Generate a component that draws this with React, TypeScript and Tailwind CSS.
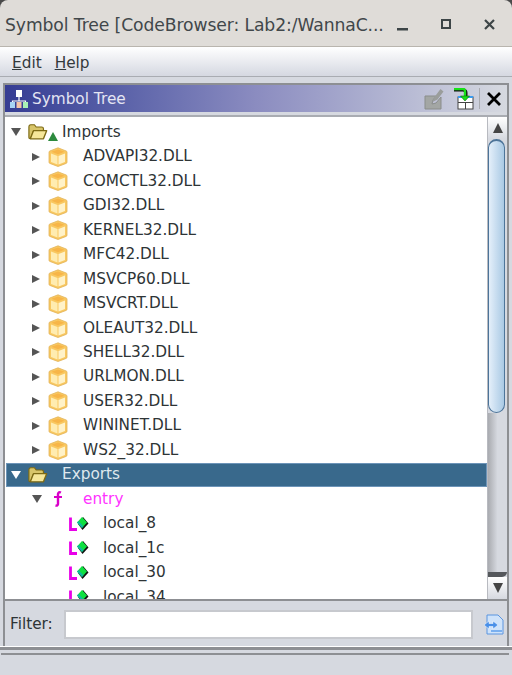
const dlls = [
  'ADVAPI32.DLL',
  'COMCTL32.DLL',
  'GDI32.DLL',
  'KERNEL32.DLL',
  'MFC42.DLL',
  'MSVCP60.DLL',
  'MSVCRT.DLL',
  'OLEAUT32.DLL',
  'SHELL32.DLL',
  'URLMON.DLL',
  'USER32.DLL',
  'WININET.DLL',
  'WS2_32.DLL',
]

const locals = ['local_8', 'local_1c', 'local_30', 'local_34']

function Arrow({ open, color = '#555' }: { open?: boolean; color?: string }) {
  return (
    <svg width="10" height="10" viewBox="0 0 10 10" className="shrink-0">
      {open ? <path d="M0 1h10L5 9z" fill={color} /> : <path d="M1 1l8 4-8 4z" fill={color} />}
    </svg>
  )
}

function Folder() {
  return (
    <svg width="20" height="18" viewBox="0 0 22 18" className="shrink-0">
      <path d="M1 3.500Q1 1 3 1h4l2 2.500h6q2 0 2 2V8H6L3 16H2q-1 0-1-1z" fill="#d8c56a" stroke="#7d6a14" strokeWidth="1.300" />
      <path d="M6 7.500h14.500L17 16.500H2.500z" fill="#f6e79a" stroke="#7d6a14" strokeWidth="1.500" strokeLinejoin="round" />
    </svg>
  )
}

function Cube() {
  return (
    <svg width="20" height="20" viewBox="0 0 20 20" className="shrink-0">
      <path d="M10 .8l8.200 3.200q.8.300.8 1.200v10q0 .9-.8 1.200L10 19.500 1.800 16.400Q1 16.100 1 15.200v-10q0-.9.800-1.200z" fill="#f9c860" stroke="#e2b45a" strokeWidth=".8" />
      <path d="M3 6.500l6.500 2.500v8.500L3 15z" fill="#ffecb0" />
      <path d="M17 6.500L10.500 9v8.500L17 15z" fill="#fff2c8" />
      <path d="M3.500 4.800L10 2.500l6.500 2.300L10 7.300z" fill="#f7b548" />
    </svg>
  )
}

function LocalIcon() {
  return (
    <svg width="20" height="16" viewBox="0 0 20 16" className="shrink-0">
      <path d="M1.500 1.500v12H8" fill="none" stroke="#e800e8" strokeWidth="2.800" />
      <path d="M9 8l5-7 5.500 6.500-6 6.500z" fill="#101010" />
      <path d="M8 6.500L13 1l5 5.500-5 5.500z" fill="#0fe040" />
      <path d="M8 6.500l5 5.500 1.500-1.800L9.500 5z" fill="#10b8a0" />
    </svg>
  )
}

function Row({ indent, children }: { indent: string; children: React.ReactNode }) {
  return <div className={`flex h-[24.47px] shrink-0 items-center ${indent}`}>{children}</div>
}

export default function App() {
  return (
    <div
      className="flex h-[675px] w-[512px] flex-col overflow-hidden bg-[#4a4a4a] text-[15.3px] text-[#2e3436]"
      style={{ fontFamily: '"DejaVu Sans", sans-serif' }}
    >
      <div className="flex h-[47px] shrink-0 items-center rounded-t-[8px] border-b border-[#b9b5ae] bg-[#dfdcd8] pl-[5px] pt-[6px]">
        <span className="whitespace-nowrap text-[17.2px] font-medium tracking-[-0.1px] text-[#41474a]">
          Symbol Tree [CodeBrowser: Lab2:/WannaC...
        </span>
        <svg width="11" height="4" viewBox="0 0 11 4" className="ml-[13px] mt-[7px] shrink-0">
          <rect width="11" height="2.500" fill="#3d4547" />
        </svg>
        <div className="ml-[33px] mb-[4px] h-[10px] w-[10px] shrink-0 border-[2.500px] border-[#3d4547]" />
        <svg width="11" height="11" viewBox="0 0 11 11" className="ml-[33px] mb-[3px] shrink-0">
          <path d="M1 1l9 9M10 1l-9 9" stroke="#3d4547" strokeWidth="2.200" />
        </svg>
      </div>

      <div className="flex h-[30px] shrink-0 items-center gap-[13px] border-b border-[#a9acb2] bg-gradient-to-b from-white to-[#d5d8e1] pl-[12px] pt-[3px] text-[#33393b]">
        <span>
          <span className="underline">E</span>dit
        </span>
        <span>
          <span className="underline">H</span>elp
        </span>
      </div>

      <div className="flex min-h-0 flex-1 flex-col bg-[#d6d9e0]">
        <div className="ml-[3px] mr-[3px] mt-[6px] flex h-[518px] shrink-0 flex-col border-2 border-[#8d8f93] bg-[#d6d9e0]">
          <div className="flex h-[27px] shrink-0 items-center bg-gradient-to-r from-[#353c93] via-[#8b8cc0] to-[#d6d9e0] pl-[4px] pr-[6px]">
            <svg width="20" height="20" viewBox="0 0 20 20" className="shrink-0">
              <rect x="7" y="1" width="6" height="7" fill="#fff" />
              <path d="M10 8v4M3.500 14v-2h13v2" fill="none" stroke="#fff" strokeWidth="1.200" />
              <rect x="1" y="13" width="5" height="6" fill="#a9d4f5" />
              <rect x="7.500" y="13" width="5" height="6" fill="#f5c4a9" />
              <rect x="14" y="13" width="5" height="6" fill="#a9f0b5" />
            </svg>
            <span className="ml-[3px] pt-[1px] text-[#e4e5f3]">Symbol Tree</span>
            <svg width="20" height="22" viewBox="0 0 20 22" className="ml-auto shrink-0">
              <path d="M1 8h11l-3 4-1 4 4-1 5-6v12H1z" fill="#a3a6a4" stroke="#8a8d8b" />
              <path d="M8.500 14l2-5 6-8 3 2.500-6 8z" fill="#9a9d9b" />
            </svg>
            <svg width="20" height="22" viewBox="0 0 20 22" className="ml-[10px] shrink-0">
              <rect x="4" y="9" width="15" height="12" fill="#fff" stroke="#444" />
              <rect x="4" y="8" width="15" height="2" fill="#3a9bf0" />
              <path d="M4 14.500h15M11.500 14.500V21" stroke="#444" />
              <path d="M0 2h9q3 0 3 3v5" fill="none" stroke="#111" strokeWidth="3" />
              <path d="M0 1h9q2 0 2 2v6" fill="none" stroke="#18e018" strokeWidth="2.400" />
              <path d="M6.500 8h9L11 13z" fill="#18e018" stroke="#0a6a0a" strokeWidth=".6" />
            </svg>
            <div className="ml-[5px] h-[21px] w-[1px] shrink-0 bg-[#a9abb0]" />
            <svg width="14" height="14" viewBox="0 0 14 14" className="ml-[7px] shrink-0">
              <path d="M1 1l12 12M13 1L1 13" stroke="#000" strokeWidth="2.800" />
            </svg>
          </div>

          <div className="mt-[3px] flex min-h-0 flex-1 border-t-[2px] border-[#a9acb2] bg-white">
            <div className="flex min-w-0 flex-1 flex-col overflow-hidden pt-[3px]">
              <Row indent="pl-[6px]">
                <Arrow open />
                <span className="ml-[7px]"><Folder /></span>
                <svg width="10" height="9" viewBox="0 0 10 9" className="mt-[8px] shrink-0">
                  <path d="M0 9L5 0l5 9z" fill="#2d8a3e" />
                </svg>
                <span className="ml-[4px]">Imports</span>
              </Row>
              {dlls.map((dll) => (
                <Row key={dll} indent="pl-[26px]">
                  <Arrow />
                  <span className="ml-[7px]"><Cube /></span>
                  <span className="ml-[15px]">{dll}</span>
                </Row>
              ))}
              <Row indent="pl-[1px]">
                <div className="flex h-full w-full items-center border border-[#6d94b8] bg-[#39698c] pl-[4px] text-[#dfe8ee]">
                  <Arrow open color="#fff" />
                  <span className="ml-[7px]"><Folder /></span>
                  <span className="ml-[14px]">Exports</span>
                </div>
              </Row>
              <Row indent="pl-[27px]">
                <Arrow open />
                <svg width="20" height="18" viewBox="0 0 20 18" className="ml-[11px] shrink-0">
                  <path d="M8 2.500Q5.500 1.500 5 4v10q-.3 2-2.500 1.500" fill="none" stroke="#d800c8" strokeWidth="2.400" />
                  <path d="M1 7h8" stroke="#d800c8" strokeWidth="2" />
                </svg>
                <span className="ml-[10px] text-[#ff33ff]">entry</span>
              </Row>
              {locals.map((name) => (
                <Row key={name} indent="pl-[64px]">
                  <LocalIcon />
                  <span className="ml-[14px]">{name}</span>
                </Row>
              ))}
            </div>

            <div className="flex w-[20px] shrink-0 flex-col border-l border-[#b8bac0] bg-[#d6d9e0]">
              <div className="flex h-[22px] shrink-0 items-center justify-center bg-gradient-to-b from-white to-[#d6d9e0]">
                <svg width="10" height="10" viewBox="0 0 10 10"><path d="M5 0l5 10H0z" fill="#444" /></svg>
              </div>
              <div className="mr-[2px] h-[274px] shrink-0 rounded-[10px] border border-t-2 border-[#4d7499] bg-gradient-to-r from-[#e4effa] to-[#a9c9e4]" />
              <div className="flex-1 bg-gradient-to-r from-[#a9abb0] via-[#d6d9e0] to-[#d6d9e0]" />
              <div className="h-[5px] shrink-0 rounded-br-[10px] bg-[#55585c]" />
              <div className="flex h-[22px] shrink-0 items-center justify-center bg-gradient-to-b from-white to-[#d6d9e0]">
                <svg width="10" height="10" viewBox="0 0 10 10"><path d="M0 0h10L5 10z" fill="#444" /></svg>
              </div>
            </div>
          </div>
        </div>

        <div className="ml-[3px] mr-[3px] flex h-[45px] shrink-0 items-center border-x-[2px] border-[#8d8f93] pl-[5px] pr-[3px] pt-[2px]">
          <span>Filter:</span>
          <div className="ml-[11px] h-[29px] flex-1 border-2 border-[#c7c9ce] bg-white" />
          <svg width="21" height="21" viewBox="0 0 21 21" className="ml-[10px] shrink-0">
            <path d="M4 1h11l5 5v14H4z" fill="#cfe3fa" stroke="#5b95e0" />
            <path d="M1 11l5-4v2.500h4V7l5 4-5 4v-2.500H6V15z" fill="#4a90e8" stroke="#fff" strokeWidth=".5" />
            <rect x="8" y="16" width="11" height="2" fill="#7ab0f0" />
          </svg>
        </div>

        <div className="h-[1px] shrink-0 bg-white" />
        <div className="h-[6px] shrink-0 border-t-[3px] border-[#8d8f93]" />
        <div className="mr-[3px] ml-[1px] flex-1 border-t-2 border-[#8d8f93] bg-[#d6d9e0]" />
      </div>
    </div>
  )
}
